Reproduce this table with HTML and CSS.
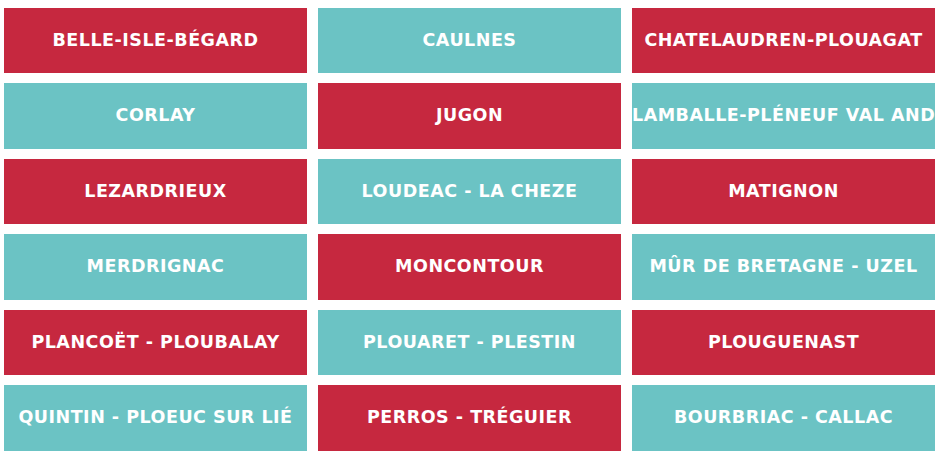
FILE: index.html
```html
<!DOCTYPE html>
<html lang="fr">
<head>
<meta charset="utf-8">
<title>Secteurs</title>
<link rel="stylesheet" href="styles.css">
</head>
<body>
<div class="grid">
  <a class="tile red">BELLE-ISLE-BÉGARD</a>
  <a class="tile teal">CAULNES</a>
  <a class="tile red">CHATELAUDREN-PLOUAGAT</a>
  <a class="tile teal">CORLAY</a>
  <a class="tile red">JUGON</a>
  <a class="tile teal">LAMBALLE-PLÉNEUF VAL ANDRÉ</a>
  <a class="tile red">LEZARDRIEUX</a>
  <a class="tile teal">LOUDEAC - LA CHEZE</a>
  <a class="tile red">MATIGNON</a>
  <a class="tile teal">MERDRIGNAC</a>
  <a class="tile red">MONCONTOUR</a>
  <a class="tile teal">MÛR DE BRETAGNE - UZEL</a>
  <a class="tile red">PLANCOËT - PLOUBALAY</a>
  <a class="tile teal">PLOUARET - PLESTIN</a>
  <a class="tile red">PLOUGUENAST</a>
  <a class="tile teal">QUINTIN - PLOEUC SUR LIÉ</a>
  <a class="tile red">PERROS - TRÉGUIER</a>
  <a class="tile teal">BOURBRIAC - CALLAC</a>
</div>
</body>
</html>
```
FILE: styles.css
```css
html, body {
  margin: 0;
  padding: 0;
  background: #ffffff;
}
.grid {
  display: grid;
  grid-template-columns: repeat(3, 303px);
  grid-auto-rows: 65.6px;
  column-gap: 11px;
  row-gap: 10px;
  padding: 7.5px 5px 0 4px;
}
.tile {
  display: block;
  overflow: hidden;
  white-space: nowrap;
  text-align: center;
  line-height: 65.6px;
  font-family: "DejaVu Sans", "Open Sans", sans-serif;
  font-weight: 700;
  font-size: 17.5px;
  letter-spacing: 0.5px;
  color: #ffffff;
  text-decoration: none;
}
.red { background: #c6283f; }
.teal { background: #6bc3c4; }
```
